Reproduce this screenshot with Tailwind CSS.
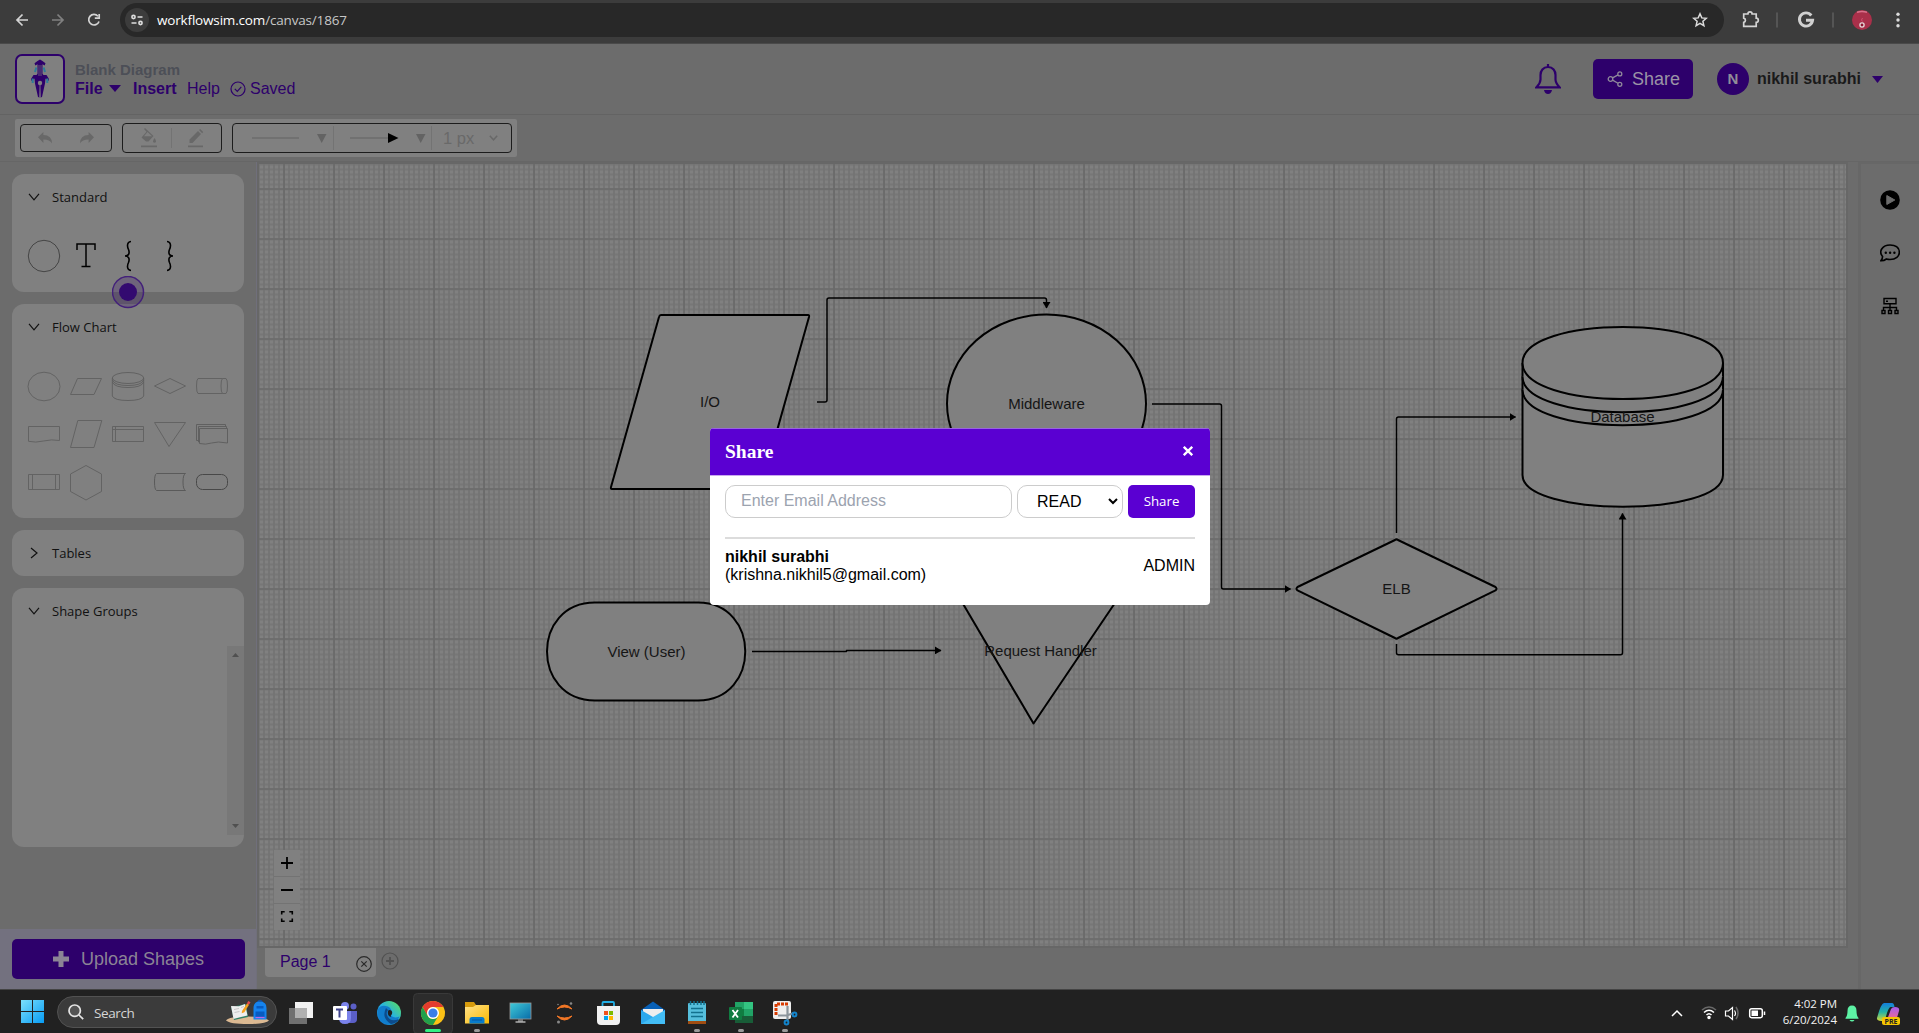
<!DOCTYPE html>
<html lang="en">
<head>
<meta charset="utf-8">
<title>Workflow canvas</title>
<script src="https://cdn.jsdelivr.net/npm/@tailwindcss/browser@4"></script>
</head>
<body class="relative flex h-[1033px] w-[1919px] flex-col overflow-hidden bg-[#6c6c6c] font-['Liberation_Sans',Arial,sans-serif]">

<!-- Browser bar -->
<div class="flex h-[44px] shrink-0 items-start border-b border-[#4a4a4a] bg-[#3c3c3c]">
  <svg class="h-[43px] w-[120px] shrink-0" viewBox="0 0 120 43" fill="none" stroke="#d4d4d4" stroke-width="1.7">
    <path d="M28 20H17.500M22.500 14.500L17 20l5.500 5.500"/>
    <path d="M52 20h11M57.500 14.500L63 20l-5.500 5.500" stroke="#808080"/>
    <path d="M98 16.200A5.300 5.300 0 1 0 99 21.500"/><path d="M99.200 14v4.200h-4.400" />
  </svg>
  <div class="mt-[3px] flex h-[34px] w-[1604px] shrink-0 items-center rounded-full bg-[#282828]">
    <div class="ml-[5px] flex size-[24px] items-center justify-center rounded-full bg-[#3c3c3c]">
      <svg class="size-[14px]" viewBox="0 0 14 14" fill="none" stroke="#dedede" stroke-width="1.6"><circle cx="3.500" cy="4" r="1.600"/><path d="M7.500 4h5M1.500 10h5"/><circle cx="10.500" cy="10" r="1.600"/></svg>
    </div>
    <div class="ml-[8px] font-['Open_Sans',sans-serif] text-[13.500px] leading-[18px] tracking-[-0.170px] text-white">workflowsim.com<span class="text-[#c7c7c7]">/canvas/1867</span></div>
    <svg class="mr-[16px] ml-auto size-[16px]" viewBox="0 0 16 16" fill="none" stroke="#dcdcdc" stroke-width="1.500"><path d="M8 1.800l1.800 4.100 4.500.4-3.400 3 1 4.400L8 11.400l-3.900 2.300 1-4.400-3.400-3 4.500-.4z"/></svg>
  </div>
  <svg class="h-[43px] w-[195px] shrink-0" viewBox="1724 0 195 43" fill="none">
    <path d="M1743.700 14h4.200a2.100 2.100 0 0 1 4.200 0h4.100v4.200a2.100 2.100 0 0 1 0 4.200v4h-12.500v-4a2.200 2.200 0 0 0 0-4.300z" stroke="#d4d4d4" stroke-width="1.700"/>
    <path d="M1777 12.500v15M1833 12.500v15" stroke="#5c5c5c" stroke-width="1.600"/>
    <path d="M1811.300 15.500A6.600 6.600 0 1 0 1812.600 20.300H1806" stroke="#d0d0d0" stroke-width="2.900"/>
    <circle cx="1862" cy="20" r="10" fill="#a9304a"/><path d="M1857 12.300q5-1.500 10 0" stroke="#d9708a" stroke-width="1.600"/><circle cx="1862" cy="25" r="2.100" fill="#8c1530" stroke="#e6dada" stroke-width="1.300"/><path d="M1862.500 18l-1 2 1 1.500" stroke="#d05070" stroke-width="1"/>
    <g fill="#dcdcdc"><circle cx="1898" cy="14.200" r="1.700"/><circle cx="1898" cy="20" r="1.700"/><circle cx="1898" cy="25.800" r="1.700"/></g>
  </svg>
</div>

<!-- Application header -->
<header class="flex h-[71px] shrink-0 items-center border-b border-[#636363] pr-[36px] pl-[15px]">
  <div class="flex h-[50px] w-[50px] items-center justify-center rounded-[7px] border-2 border-[#2d006b] bg-[#808080]">
    <svg class="h-[40px] w-[20px]" viewBox="0 0 20 40"><path d="M10 .5l2.500 1.500 3 2.200-.8 2.300-2.200-1.300v9.500l1 1.300h3l2.500 4-.6 2-2.900-2.500-.5 5-3 13.500-1.500.5L10 28 9.500 38.500 8 38 5 24.500l-.5-5L1.600 22 1 20l2.500-4h3l1-1.300V5.200L5.300 6.500l-.8-2.300L7.500 2z" fill="#2d006b"/><path d="M9 6v11M11 6v11" stroke="#808080" stroke-width=".7"/><path d="M6.300 8.500L5 13M13.700 8.500l1.300 4.500" stroke="#2e7c99" stroke-width="2"/><path d="M2.700 19.500v4.500M17.300 19.500v4.500" stroke="#2e7c99" stroke-width="2"/><circle cx="10" cy="24" r="2.200" fill="#808080"/><path d="M10 25v13" stroke="#808080" stroke-width=".9"/></svg>
  </div>
  <div class="ml-[10px] flex flex-col text-[16px] leading-[19px] text-[#2d006b]">
    <div class="h-[19px] text-[15px] font-bold text-[#4c4f57]">Blank Diagram</div>
    <div class="flex h-[19px] items-center">
      <span class="w-[28px] font-bold">File</span>
      <svg class="ml-[6px] h-[7px] w-[12px]" viewBox="0 0 12 7"><path d="M0 0h12L6 7z" fill="#2d006b"/></svg>
      <span class="ml-[12px] w-[44px] font-bold">Insert</span>
      <span class="ml-[10px] w-[33px]">Help</span>
      <svg class="ml-[10px] size-[16px]" viewBox="0 0 16 16" fill="none" stroke="#2d006b" stroke-width="1.200"><circle cx="8" cy="8" r="7"/><path d="M4.800 7.800l2.500 2.600 4-4.500"/></svg>
      <span class="ml-[4px]">Saved</span>
    </div>
  </div>
  <svg class="ml-auto h-[30px] w-[26px]" viewBox="0 0 26 30" fill="none"><path d="M13 3C8 3 5.500 7 5.500 11v4.500C5.500 19 3.500 21 1.500 23.300h23C22.500 21 20.500 19 20.500 15.500V11C20.500 7 18 3 13 3zM13 0v4" stroke="#2d006b" stroke-width="2.200"/><path d="M9 26h8q-.8 4-4 4t-4-4z" fill="#2d006b"/></svg>
  <div class="ml-[32px] flex h-[40px] w-[100px] items-center rounded-[5px] bg-[#2d006b] pl-[14px] text-[18px] text-[#9b93a6]">
    <svg class="size-[16px]" viewBox="0 0 16 16" fill="none" stroke="#8f889b" stroke-width="1.300"><circle cx="3.500" cy="8" r="2.300"/><circle cx="12.800" cy="2.900" r="2"/><circle cx="12.800" cy="13.300" r="2"/><path d="M5.600 6.900l5.400-3M5.600 9.100l5.400 3.100"/></svg>
    <span class="ml-[9px]">Share</span>
  </div>
  <div class="ml-[24px] flex size-[32px] items-center justify-center rounded-full bg-[#2d006b] text-[15px] font-bold text-[#918d98]">N</div>
  <span class="ml-[8px] text-[16px] font-bold text-[#1a1a1a]">nikhil surabhi</span>
  <svg class="ml-[11px] h-[7px] w-[11px]" viewBox="0 0 11 7"><path d="M0 0h11L5.500 7z" fill="#2d006b"/></svg>
</header>

<!-- Toolbar -->
<div class="flex h-[46px] shrink-0 items-center pl-[15px]">
  <div class="flex h-[38px] w-[502px] items-center gap-[10px] rounded-[2px] bg-[#808080] pl-[5px]">
    <div class="flex h-[28px] w-[92px] items-center justify-between rounded-[4px] border border-[#1c1c1c] px-[17px]">
      <svg class="h-[12px] w-[14px]" viewBox="0 0 13 12" preserveAspectRatio="none"><path d="M5 0v3q8 0 8 8.500Q11 7.500 5 7.500V11L0 5.200z" fill="#686868"/></svg>
      <svg class="h-[12px] w-[14px]" viewBox="0 0 13 12" preserveAspectRatio="none"><path d="M8 0v3q-8 0-8 8.500Q2 7.500 8 7.500V11l5-5.800z" fill="#686868"/></svg>
    </div>
    <div class="flex h-[30px] w-[100px] items-center rounded-[4px] border border-[#1c1c1c] pl-[17px]">
      <svg class="h-[20px] w-[68px]" viewBox="0 0 68 20"><g fill="#686868"><path d="M1 17.500h16v1.800H1zM48 17.500h15v1.800H48zM4 1l1-1 8.500 8-5 5.500H6L1.500 9.500l5-5.800zM14.500 10q2 2.500 1.500 4-1.500 1.500-3 0-.3-1.500 1.500-4zM49.500 15v-3.500L58 3l3 3-8.500 9zM59 2l1.200-1 3 3-1 1.200z"/></g><path d="M4 8.300h8L7.500 4z" fill="#808080"/><path d="M31.500 0v20" stroke="#737373"/></svg>
    </div>
    <div class="flex h-[30px] w-[280px] items-center rounded-[4px] border border-[#1c1c1c] pl-[19px]">
      <svg class="h-[24px] w-[181px] shrink-0" viewBox="0 0 181 24"><path d="M0 12h47M98 12h38" stroke="#6c6c6c" stroke-width="1.500"/><path d="M65 8h9.500L69.700 17zM164 8h9.500L168.700 17z" fill="#636363"/><path d="M136 7l10.500 5-10.500 5z" fill="#000"/><path d="M81.500 0v24M179.500 0v24" stroke="#737373"/></svg>
      <span class="ml-[10px] text-[16.500px] text-[#696969]">1 px</span>
      <svg class="ml-[15px] h-[6px] w-[9px]" viewBox="0 0 9 6" fill="none" stroke="#686868" stroke-width="1.500"><path d="M.8.800l3.700 4 3.700-4"/></svg>
    </div>
  </div>
</div>

<!-- Work area -->
<main class="flex h-[828px] shrink-0 border-t border-[#666]">
  <aside class="flex w-[257px] shrink-0 flex-col border-r border-[#706f7b] font-['Open_Sans',sans-serif] text-[13px] text-[#111]">
    <div class="flex h-[767px] flex-col gap-[12px] pt-[12px] pl-[12px]">
      <section class="h-[118px] w-[232px] rounded-[12px] bg-[#808080]">
        <div class="flex h-[46px] items-center gap-[12px] pl-[16px]"><svg class="h-[8px] w-[12px]" viewBox="0 0 12 8" fill="none" stroke="#111" stroke-width="1.200"><path d="M1 .800l5 6 5-6"/></svg><span class="pt-[2px]">Standard</span></div>
        <svg class="h-[72px] w-[232px]" viewBox="12 220 232 72" fill="none">
          <circle cx="44" cy="256" r="15.700" stroke="#454545"/>
          <path d="M77 250v-6h18v6M86 244v22M81.500 266.500h9" stroke="#000" stroke-width="1.500"/>
          <path d="M131 241.500q-3.500.5-3.500 4 0 2 1 4 1.200 3 0 5-.8 1.500-3.500 1.500 2.700 0 3.500 1.500 1.200 2 0 5-1 2-1 4 0 3.500 3.500 4M167 241.500q3.500.5 3.500 4 0 2-1 4-1.200 3 0 5 .8 1.500 3.500 1.500-2.700 0-3.500 1.500-1.200 2 0 5 1 2 1 4 0 3.500-3.500 4" stroke="#000" stroke-width="1.600"/>
        </svg>
      </section>
      <section class="relative h-[214px] w-[232px] rounded-[12px] bg-[#808080]">
        <div class="flex h-[46px] items-center gap-[12px] pl-[16px]"><svg class="h-[8px] w-[12px]" viewBox="0 0 12 8" fill="none" stroke="#111" stroke-width="1.200"><path d="M1 .800l5 6 5-6"/></svg><span class="pt-[2px]">Flow Chart</span></div>
        <svg class="absolute -top-[28px] left-[100px] size-[33px]" viewBox="0 0 33 33"><circle cx="16" cy="16" r="15.500" fill="#2d006b" fill-opacity=".22" stroke="#43207a" stroke-width="1.500"/><circle cx="16" cy="16" r="9" fill="#330a70"/></svg>
        <svg class="h-[168px] w-[232px]" viewBox="12 350 232 168" fill="none" stroke="#636363">
          <ellipse cx="44" cy="386.500" rx="16" ry="14.300"/>
          <path d="M77.500 378.500h24l-7.500 16H70.500z"/>
          <g stroke="#5e5e5e" stroke-width=".9"><ellipse cx="128" cy="378" rx="15.700" ry="5.500"/><path d="M112.300 378v18q2 4.500 15.700 4.500t15.700-4.500v-18M112.300 380q2 5.500 15.700 5.500t15.700-5.500M112.300 382q2 5.500 15.700 5.500t15.700-5.500"/></g>
          <path d="M154.500 386l15.500-7.500 15.500 7.500-15.500 7.500z"/>
          <path d="M198 378.500h24.500q-1.500 1-1.500 7.500t1.500 7.500H198q-1.500-1-1.500-7.500t1.500-7.500z"/><path d="M222.500 378.500h3.500q1.500 1 1.500 7.500t-1.500 7.500h-3.500"/>
          <path d="M28.500 426.500h31v14q-8-1.500-16 .5t-15 .3z"/>
          <path d="M77.800 420.500h24l-7.800 27H70.500z"/>
          <path d="M112.500 426.500h31v15h-31zM115.500 426.500v15M112.500 429.500h31"/>
          <path d="M154.500 422.500h31l-16.500 24z"/>
          <path d="M199.500 443.500q6 1.500 12-.5t16 0v-14.500h-28zM199.500 442h-1v-15.500h28v2M198.500 440.500h-2v-16h29v2" stroke="#5c5c5c" stroke-width=".9"/>
          <path d="M28.500 474.500h31v15h-31zM32.500 474.500v15M55.500 474.500v15"/>
          <path d="M86 465.500l15.500 8.500v17.500L86 500l-15.500-8.500V474z"/>
          <path d="M185.500 473.500h-29q-2 1-2 8.500t2 8.500h29q-2.500-1-2.500-8.500t2.500-8.500z" stroke="#5a5a5a"/>
          <rect x="196.500" y="474.500" width="31" height="15" rx="6" stroke="#484848"/>
        </svg>
      </section>
      <section class="flex h-[46px] w-[232px] items-center gap-[12px] rounded-[12px] bg-[#808080] pl-[16px]"><svg class="h-[12px] w-[12px]" viewBox="0 0 12 12" fill="none" stroke="#111" stroke-width="1.200"><path d="M3 1l6 5-6 5"/></svg><span class="pt-[2px]">Tables</span></section>
      <section class="h-[259px] w-[232px] rounded-[12px] bg-[#808080]">
        <div class="flex h-[46px] items-center gap-[12px] pl-[16px]"><svg class="h-[8px] w-[12px]" viewBox="0 0 12 8" fill="none" stroke="#111" stroke-width="1.200"><path d="M1 .800l5 6 5-6"/></svg><span class="pt-[2px]">Shape Groups</span></div>
        <div class="mt-[12px] ml-auto flex h-[189px] w-[17px] flex-col items-center justify-between bg-[#787878] py-[7px]">
          <svg class="h-[4px] w-[7px]" viewBox="0 0 7 4"><path d="M3.500 0L7 4H0z" fill="#505050"/></svg>
          <svg class="h-[4px] w-[7px]" viewBox="0 0 7 4"><path d="M0 0h7L3.500 4z" fill="#505050"/></svg>
        </div>
      </section>
    </div>
    <div class="flex h-[60px] bg-[#73717f] pt-[10px] pl-[12px]">
      <div class="flex h-[40px] w-[233px] items-center justify-center rounded-[5px] bg-[#2d006b] font-['Liberation_Sans',Arial,sans-serif] text-[18px] text-[#8b8495]"><svg class="mr-[12px] size-[16px]" viewBox="0 0 16 16"><path d="M5.500 0h5v5.500H16v5h-5.500V16h-5v-5.500H0v-5h5.500z" fill="#8b8495"/></svg>Upload Shapes</div>
    </div>
  </aside>

  <div class="flex w-[1591px] shrink-0 flex-col">
    <div class="h-[786px] w-[1591px] shrink-0 border-2 border-[#676767]">
      <svg class="h-[782px] w-[1587px]" viewBox="259 164 1587 782" font-family="'Liberation Sans',Arial,sans-serif" font-size="15" text-anchor="middle">
        <defs>
          <pattern id="minor" x="283" y="188.500" width="5" height="5" patternUnits="userSpaceOnUse"><path d="M0 1h5M1 0v5" stroke="#737373" stroke-width="1.700"/></pattern>
          <pattern id="major" x="283" y="188" width="50" height="50" patternUnits="userSpaceOnUse"><path d="M0 1h50M1 0v50" stroke="#6a6a6a" stroke-width="1.700"/></pattern>
          <marker id="arrow" viewBox="0 0 7 8" refX="6" refY="4" markerWidth="7" markerHeight="8" markerUnits="userSpaceOnUse" orient="auto"><path d="M0 0l6.500 4L0 8z"/></marker>
        </defs>
        <rect x="259" y="164" width="1587" height="782" fill="#808080"/>
        <rect x="259" y="164" width="1587" height="782" fill="url(#minor)"/>
        <rect x="259" y="164" width="1587" height="782" fill="url(#major)"/>
        <!-- connectors -->
        <g fill="none" stroke="#000" stroke-width="1.500" stroke-linejoin="round">
          <path d="M817 402h8q2 0 2-2V300q0-2 2-2h215.500q2 0 2 2v8" marker-end="url(#arrow)"/>
          <path d="M1152 404h67.500q2 0 2 2v181q0 2 2 2h67" marker-end="url(#arrow)"/>
          <path d="M752 651.400h94.500v-1H941" marker-end="url(#arrow)"/>
          <path d="M1396.500 533V419q0-2 2-2H1515.500" marker-end="url(#arrow)"/>
          <path d="M1396.500 644v8.700q0 2 2 2h222q2 0 2-2V513.500" marker-end="url(#arrow)"/>
        </g>
        <!-- nodes -->
        <g fill="#808080" stroke="#000" stroke-width="2" stroke-linejoin="round">
          <path d="M661 315h147q1.500 0 1 2l-48 170.500q-.5 1.500-2 1.500H612q-1.500 0-1-2l48-170q.5-2 2-2z"/>
          <ellipse cx="1046.500" cy="403.500" rx="99.500" ry="89"/>
          <path d="M595 602.500h103c63 0 63 98 0 98H595c-64 0-64-98 0-98z"/>
          <path d="M949 580h181.500L1033.500 723.500z"/>
          <path d="M1395 540q1.500-1.200 3 0l97.500 47q2 1.700 0 3.400L1398 638q-1.500 1.200-3 0l-97.500-47.600q-2-1.700 0-3.400z"/>
          <path d="M1522.500 363v112c0 42.300 200.500 42.300 200.500 0V363"/>
          <path d="M1522.500 389.500c0 47.500 200.500 47.500 200.500 0M1522.500 376.500c0 47.500 200.500 47.500 200.500 0"/>
          <path d="M1522.500 363c0-48 200.500-48 200.500 0 0 48-200.500 48-200.500 0z"/>
        </g>
        <g fill="#151515">
          <text x="710" y="406.500">I/O</text><text x="1046.500" y="409">Middleware</text><text x="646.500" y="657">View (User)</text><text x="1040.500" y="656">Request Handler</text><text x="1396.500" y="594">ELB</text><text x="1622.500" y="422">Database</text>
        </g>
        <!-- zoom controls -->
        <g><rect x="274" y="850" width="26" height="80" fill="#808080"/><path d="M274 876.500h26M274 903.500h26" stroke="#737373"/><path d="M281 863h12M287 857v12M281 890h12" stroke="#000" stroke-width="1.800"/><path d="M281.700 914.500v-2.800h3M289.300 911.700h3v2.800M292.300 918.500v2.800h-3M284.700 921.300h-3v-2.800" fill="none" stroke="#000" stroke-width="1.600"/></g>
      </svg>
    </div>
    <div class="flex h-[41px] items-start pl-[8px]">
      <div class="flex h-[29px] w-[111px] items-center rounded-b-[4px] bg-[#808080] pb-px pl-[15px] text-[16px] text-[#2d006b]">Page 1<svg class="mt-[4px] ml-auto mr-[4px] size-[16px]" viewBox="0 0 16 16" fill="none" stroke="#2a2a2a" stroke-width="1.200"><circle cx="8" cy="8" r="7.300"/><path d="M5.300 5.300l5.400 5.400M10.700 5.300l-5.400 5.400"/></svg></div>
      <svg class="mt-[4px] ml-[5px] size-[18px]" viewBox="0 0 18 18" fill="none" stroke="#515151" stroke-width="1.200"><circle cx="9" cy="9" r="8"/><path d="M9 5v8M5 9h8" stroke-width="1.800"/></svg>
    </div>
  </div>

  <div class="ml-[10px] flex h-[828px] w-[61px] flex-col items-center gap-[33px] border-t-2 border-l-3 border-[#676767] pt-[26px]">
    <svg class="size-[20px]" viewBox="0 0 20 20"><circle cx="10" cy="10" r="9.800"/><path d="M6.800 5.500v9l8-4.500z" fill="#6c6c6c" stroke="#6c6c6c" stroke-linejoin="round"/></svg>
    <svg class="size-[20px]" viewBox="0 0 20 20"><path d="M2.600 13.500C-2 8 2.800 2 10 2s9.300 4 9.300 7.500S16 16.500 10 16.500q-2 0-3.600-.5-2.400 1.800-5.500 1.700 1.700-2 1.700-4.200z" fill="none" stroke="#000" stroke-width="1.600"/><circle cx="5.800" cy="9.700" r="1.200"/><circle cx="10.100" cy="9.700" r="1.200"/><circle cx="14.400" cy="9.700" r="1.200"/></svg>
    <svg class="size-[20px]" viewBox="0 0 20 20" fill="none" stroke="#000" stroke-width="1.400"><path d="M4 2.500h12v5.300H4zM10 8v3M3.500 14.500v-3h13v3M10 11.500v3M2 14.500h3v3H2zM8.500 14.500h3v3h-3zM15 14.500h3v3h-3zM6 5.200h2"/></svg>
  </div>
</main>

<!-- Taskbar -->
<footer class="flex h-[44px] shrink-0 items-center border-t border-[#444] bg-[#212121] font-['Open_Sans',sans-serif]">
  <svg class="ml-[21px] size-[23px]" viewBox="0 0 23 23"><defs><linearGradient id="win" x1="0" y1="0" x2="1" y2="1"><stop stop-color="#7ce0fb"/><stop offset="1" stop-color="#079bf4"/></linearGradient></defs><path d="M0 0h11v11H0zM12 0h11v11H12zM0 12h11v11H0zM12 12h11v11H12z" fill="url(#win)"/></svg>
  <div class="mt-px ml-[13px] flex h-[32px] w-[220px] items-center rounded-full border border-[#525252] bg-[#3b3b3b] pl-[10px]">
    <svg class="size-[16px]" viewBox="0 0 16 16" fill="none" stroke="#e5e5e5" stroke-width="1.700"><circle cx="6.700" cy="6.700" r="5.700" fill="#545454"/><path d="M11 11l4.200 4.200"/></svg>
    <span class="ml-[10px] pt-[2px] text-[13.500px] tracking-[-0.400px] text-[#d5d5d5]">Search</span>
    <svg class="mr-[5px] ml-auto h-[26px] w-[46px]" viewBox="0 0 46 26"><path d="M1 21.500q3-4 21-4t22 4q-3 3.500-21 3.500T1 21.500z" fill="#dcb992"/><path d="M6 8l15-3 2 13-14 3z" fill="#308168"/><path d="M6 7l8 .3 6-2.300 2.500 11.500-7.500 1.700-6.500 1.800z" fill="#eee"/><path d="M9 10.500l5-1M9.500 13.500l5-1M16 8.500l3-1" stroke="#bbb" stroke-width=".8"/><path d="M17 12l5-7.500 2 1.300-4.600 7.400-2.700 1z" fill="#f5a11d"/><path d="M21.800 4.500l1.500-2.500 2.200 1.300-1.500 2.500z" fill="#e84b4b"/><path d="M32.500 3.500q2.500-4 5 0" fill="none" stroke="#1450a0" stroke-width="1.600"/><path d="M28.500 9q0-6.500 6.500-6.500t6.500 6.500v11.500h-13z" fill="#1583ee"/><path d="M31.500 7h7v2.500h-7zM30.500 12.500h9v5.500h-9z" fill="#075bc1"/><path d="M30.500 18.500h9" stroke="#bb68e8" stroke-width="1.300"/></svg>
  </div>
  <svg class="ml-[3px] h-[43px] w-[520px]" viewBox="280 990 520 43">
    <defs>
      <linearGradient id="edge" x1="0" y1="1" x2="1" y2="0"><stop stop-color="#0a65c7"/><stop offset=".5" stop-color="#26b2e3"/><stop offset="1" stop-color="#5fe352"/></linearGradient>
      <linearGradient id="folder" x1="0" y1="0" x2="1" y2="1"><stop stop-color="#ffe28a"/><stop offset="1" stop-color="#fbb900"/></linearGradient>
      <linearGradient id="screen" x1="0" y1="0" x2="1" y2="1"><stop stop-color="#40cad8"/><stop offset="1" stop-color="#086ba8"/></linearGradient>
    </defs>
    <rect x="295" y="1002" width="18" height="16" fill="#f2f2f2"/><rect x="289" y="1008" width="18" height="16" fill="#777" fill-opacity=".92"/><path d="M295 1008h12v10h-12z" fill="#b0b0b0"/>
    <g fill="#5b5fc7"><circle cx="345" cy="1006" r="4" fill="#7b83eb"/><circle cx="353.500" cy="1006.500" r="3"/><path d="M348 1011h9v8q0 4-4 4h-5z"/><path d="M339 1011h12v7q0 6-6 6t-6-6z" fill="#7b83eb"/></g><rect x="333" y="1006" width="14" height="14" rx="1" fill="#fff"/><path d="M336 1009.500h7M339.500 1009.500v8" stroke="#3f438e" stroke-width="2"/>
    <circle cx="389" cy="1013" r="12" fill="url(#edge)"/><path d="M377.500 1010q3-5 8-4 5 .5 6 5-2 2-1 4 3 4 9 1.500-3 8-11 8-11-2-11-14.500z" fill="#117dcc"/><path d="M386 1008q-5 10 5 16 6-.5 8-5-9 4-12-4-1-3 1-5z" fill="#0d4b8b"/><path d="M389 1010q4 0 3 4-2 2-1 3-4-1-3-6z" fill="#202020"/>
    <rect x="413.500" y="993.500" width="39" height="40" rx="4" fill="#2c2c2c" stroke="#393939"/><circle cx="433" cy="1013" r="12" fill="#fbc116"/><path d="M422.600 1007A12 12 0 0 1 443.400 1007H433a6 6 0 0 0-5.200 9z" fill="#e33b2e"/><path d="M422.600 1007a12 12 0 0 0 10.400 18l5.200-9a6 6 0 0 1-10.400 0z" fill="#22a04b"/><circle cx="433" cy="1013" r="6" fill="#fff"/><circle cx="433" cy="1013" r="4.600" fill="#397de8"/><rect x="425" y="1029" width="16" height="3" rx="1.500" fill="#30f084"/>
    <path d="M465 1002h9l2 3h13v18h-24z" fill="#d79b0c"/><path d="M465 1007h8l3-2h13v18.500h-24z" fill="url(#folder)"/><path d="M469.500 1023.500v-4q0-2.500 2.500-2.500h10q2.500 0 2.500 2.500v4z" fill="#087ccc"/><path d="M472 1020h10" stroke="#0456a3"/>
    <rect x="510" y="1003" width="21" height="16" fill="url(#screen)" stroke="#999" stroke-width=".8"/><path d="M518 1019h5v3h-5z" fill="#777"/><path d="M515.500 1022h10" stroke="#bbb" stroke-width="1.400"/>
    <path d="M557 1009q7.500-8 15 0-7.500-4-15 0zM557 1016q7.500 8 15 0-7.500 4-15 0z" fill="#f37726" stroke="#f37726"/><g fill="#888"><circle cx="571" cy="1003.500" r="1.300"/><circle cx="558.500" cy="1022" r="1.500"/><circle cx="558" cy="1004.500" r=".8"/></g>
    <path d="M602.500 1007v-4q0-1 1-1h9.500q1 0 1 1v4" fill="none" stroke="#20aee5" stroke-width="1.800"/><path d="M597 1006h23v15q0 4-4 4h-15q-4 0-4-4z" fill="#f1f1f1"/><path d="M604 1011h4v4h-4z" fill="#f1511b"/><path d="M609 1011h4v4h-4z" fill="#7ebb00"/><path d="M604 1016h4v4h-4z" fill="#00a3ee"/><path d="M609 1016h4v4h-4z" fill="#ffb800"/>
    <path d="M641 1010l12-8.500 12 8.500v14h-24z" fill="#0860b6"/><path d="M643 1009h20v8l-10 5-10-5z" fill="#eee"/><path d="M641 1010l24 14h-24z" fill="#2ba8ed"/><path d="M665 1010v14h-24l12-7z" fill="#43bdf5"/>
    <rect x="688" y="1003" width="18" height="21" rx="1" fill="#56bfdc"/><path d="M688 1021h18v3h-18z" fill="#a04d12"/><path d="M690.500 1001v4M694 1001v4M697.500 1001v4M701 1001v4M704 1001v4" stroke="#12718e" stroke-width="1.500"/><path d="M691 1008.500h12M691 1012.500h12M691 1016.500h12" stroke="#12718e" stroke-width="1.500"/>
    <path d="M735 1002h18v21h-18z" fill="#21a366"/><path d="M744 1002h9v7h-9z" fill="#33c481"/><path d="M735 1009h9v7h-9z" fill="#107c41"/><path d="M735 1016h18v7h-18z" fill="#185c37"/><rect x="729" y="1007" width="13" height="13" rx="1" fill="#107c41"/><path d="M732.500 1010l5.500 7.500M738 1010l-5.500 7.500" stroke="#fff" stroke-width="1.800"/>
    <rect x="773" y="1001" width="18" height="18" rx="2" fill="#eee"/><path d="M776 1015v-11h12" fill="none" stroke="#d83b01" stroke-width="3" stroke-dasharray="3 1"/><path d="M778 1015.500h10M787.500 1006v15M788 1015l6-2" stroke="#8b949b" stroke-width="2.200"/><g fill="none" stroke="#1284cc" stroke-width="2"><circle cx="794.500" cy="1014.500" r="1.900"/><circle cx="786.500" cy="1022.500" r="1.900"/></g>
    <g fill="#9a9a9a"><rect x="474" y="1029" width="6" height="3" rx="1.500"/><rect x="694" y="1029" width="6" height="3" rx="1.500"/><rect x="738" y="1029" width="6" height="3" rx="1.500"/><rect x="782" y="1029" width="6" height="3" rx="1.500"/></g>
  </svg>
  <svg class="ml-auto h-[43px] w-[100px]" viewBox="1670 990 100 43" fill="none" stroke="#fff" stroke-width="1.500">
    <path d="M1672 1016l5-5 5 5"/>
    <g stroke="#686868"><path d="M1702 1010q7-6 14 0"/><path d="M1736 1007q4 6 0 12"/></g>
    <path d="M1704 1012.500q5-4.500 10 0M1706.500 1015q2.500-2.500 5 0"/><circle cx="1709" cy="1017.500" r="1" fill="#fff"/>
    <path d="M1725.500 1011h3l4-3.500v12l-4-3.500h-3zM1734.500 1010.500q2 3 0 5.500" stroke-width="1.200"/>
    <rect x="1749.700" y="1008.700" width="12.600" height="9" rx="2"/><path d="M1751.500 1010.500h6.500v5.500h-6.500z" fill="#fff" stroke="none"/><path d="M1764.500 1011.500v3.500"/>
  </svg>
  <div class="w-[67px] pt-px text-right text-[11.500px] leading-[16px] tracking-[-0.020px] text-[#f2f2f2]"><div>4:02 PM</div><div>6/20/2024</div></div>
  <svg class="ml-[8px] h-[43px] w-[74px]" viewBox="1845 990 74 43"><path d="M1845.500 1018q2-2 2-7 0-5.500 4.500-5.500t4.500 5.500q0 5 2 7v.7h-13zM1849.500 1020h5q-1 1.500-2.500 1.500t-2.500-1.500z" fill="#5df2a5"/>
    <defs><linearGradient id="cop" x1="0" y1="0" x2="0" y2="1"><stop stop-color="#137edc"/><stop offset=".5" stop-color="#25b2a5"/><stop offset="1" stop-color="#d5db38"/></linearGradient><linearGradient id="cop2" x1="0" y1="0" x2="0" y2="1"><stop stop-color="#a45cf0"/><stop offset="1" stop-color="#fa6d81"/></linearGradient></defs>
    <path d="M1877 1018q4-15 7-15h8q2 0 2.500 4h-4q-2 0-5 11-1 3-4 3-5 0-4.500-3z" fill="url(#cop)"/><path d="M1887 1020l4-11q1-2 4-2 5 0 4 4l-3 10z" fill="url(#cop2)"/><rect x="1882" y="1017" width="18" height="8" rx="2" fill="#f7c600"/><text x="1891" y="1024" text-anchor="middle" font-size="7" font-weight="700" font-family="Open Sans,sans-serif" fill="#222">PRE</text></svg>
</footer>

<!-- Share dialog -->
<div class="absolute top-[428px] left-[710px] flex h-[177px] w-[500px] flex-col overflow-hidden rounded-[4px] bg-white text-[16px] text-black" role="dialog">
  <div class="flex h-[48px] shrink-0 items-center justify-between border-t border-b border-t-[#9a63e0] border-b-[#c9a8ee] bg-[#5a00d2] px-[15px] text-white">
    <h2 class="font-['Liberation_Serif',serif] text-[19.500px] font-bold">Share</h2>
    <svg class="mr-[2px] mb-[2px] size-[10px]" viewBox="0 0 10 10" stroke="#fff" stroke-width="2.300"><path d="M.8.800l8.400 8.400M9.200.800L.8 9.200"/></svg>
  </div>
  <div class="mx-[15px] mt-[9px] flex h-[33px] items-center gap-[5px]">
    <div class="flex h-[33px] w-[287px] items-center rounded-[10px] border border-[#ccc] pb-[2px] pl-[15px] text-[#9ca3af]">Enter Email Address</div>
    <div class="flex h-[33px] w-[106px] items-center justify-between rounded-[10px] border border-[#ccc] pr-[4px] pl-[19px]">READ<svg class="h-[7px] w-[10px]" viewBox="0 0 10 7" fill="none" stroke="#000" stroke-width="2"><path d="M1 1l4 4 4-4"/></svg></div>
    <div class="flex h-[33px] w-[67px] items-center justify-center rounded-[5px] bg-[#5a00d2] font-['Open_Sans',sans-serif] text-[13.300px] text-white">Share</div>
  </div>
  <div class="mx-[15px] mt-[19px] flex h-[56px] items-center justify-between border-t-2 border-[#dcdcdc]">
    <div class="leading-[18px]"><div class="font-bold">nikhil surabhi</div><div>(krishna.nikhil5@gmail.com)</div></div>
    <div>ADMIN</div>
  </div>
</div>
</body>
</html>
